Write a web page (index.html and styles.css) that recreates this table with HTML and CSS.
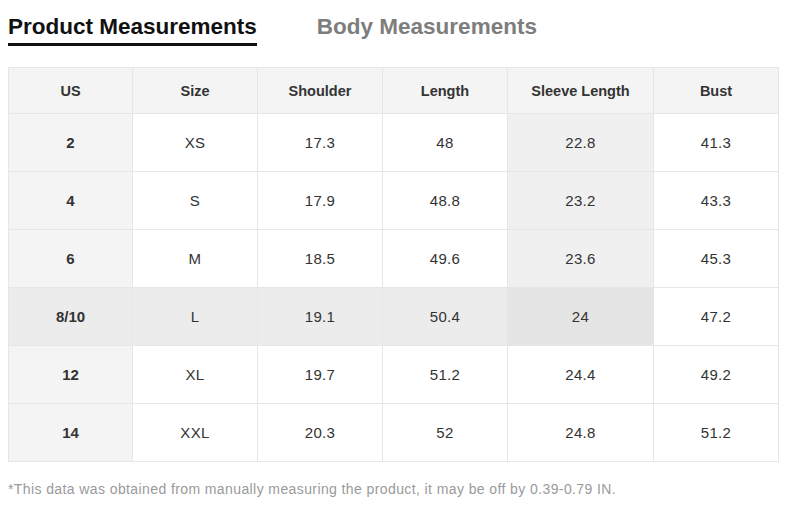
FILE: index.html
```html
<!DOCTYPE html>
<html>
<head>
<meta charset="utf-8">
<link rel="stylesheet" href="styles.css">
</head>
<body>
<div class="page">
  <div class="tabs">
    <div class="tab active">Product Measurements</div>
    <div class="tab">Body Measurements</div>
  </div>
  <table class="sizes">
    <colgroup>
      <col class="c1"><col class="c2"><col class="c3"><col class="c4"><col class="c5"><col class="c6">
    </colgroup>
    <thead>
      <tr><th>US</th><th>Size</th><th>Shoulder</th><th>Length</th><th>Sleeve Length</th><th>Bust</th></tr>
    </thead>
    <tbody>
      <tr><td class="us">2</td><td>XS</td><td>17.3</td><td>48</td><td class="hl">22.8</td><td>41.3</td></tr>
      <tr><td class="us">4</td><td>S</td><td>17.9</td><td>48.8</td><td class="hl">23.2</td><td>43.3</td></tr>
      <tr><td class="us">6</td><td>M</td><td>18.5</td><td>49.6</td><td class="hl">23.6</td><td>45.3</td></tr>
      <tr class="hlrow"><td class="us">8/10</td><td>L</td><td>19.1</td><td>50.4</td><td class="cross">24</td><td class="plain">47.2</td></tr>
      <tr><td class="us">12</td><td>XL</td><td>19.7</td><td>51.2</td><td>24.4</td><td>49.2</td></tr>
      <tr><td class="us">14</td><td>XXL</td><td>20.3</td><td>52</td><td>24.8</td><td>51.2</td></tr>
    </tbody>
  </table>
  <p class="note">*This data was obtained from manually measuring the product, it may be off by 0.39-0.79 IN.</p>
</div>
</body>
</html>
```

FILE: styles.css
```css
html, body {
  margin: 0;
  padding: 0;
  background: #ffffff;
}
.page {
  padding: 14px 16px 0 8px;
  font-family: "Liberation Sans", Arial, sans-serif;
}
.tabs {
  display: flex;
  gap: 60px;
  margin-bottom: 21px;
}
.tab {
  font-size: 22.5px;
  font-weight: bold;
  line-height: 26px;
  color: #7d7d7d;
  padding-bottom: 3px;
  border-bottom: 3px solid transparent;
}
.tab.active {
  color: #111111;
  border-bottom-color: #111111;
}
.sizes {
  border-collapse: collapse;
  table-layout: fixed;
  width: 770px;
  border: 1px solid #e3e3e3;
}
.c1 { width: 124px; }
.c2, .c3, .c4, .c6 { width: 125px; }
.c5 { width: 146px; }
.sizes th, .sizes td {
  border: 1px solid #e6e6e6;
  text-align: center;
  padding: 0;
  color: #333333;
}
.sizes th {
  height: 45px;
  background: #f4f4f4;
  font-weight: bold;
  font-size: 14.5px;
}
.sizes td {
  height: 57px;
  background: #ffffff;
  font-size: 15px;
  letter-spacing: 0.3px;
}
.sizes td.us {
  background: #f4f4f4;
  font-weight: bold;
  letter-spacing: 0;
}
.sizes td.hl {
  background: #f0f0f0;
}
.sizes tr.hlrow td {
  background: #ececec;
}
.sizes tr.hlrow td.cross {
  background: #e5e5e5;
}
.sizes tr.hlrow td.plain {
  background: #ffffff;
}
.note {
  margin: 19px 0 0 0;
  font-size: 14px;
  line-height: 16px;
  letter-spacing: 0.4px;
  color: #9a9a9a;
}
```
